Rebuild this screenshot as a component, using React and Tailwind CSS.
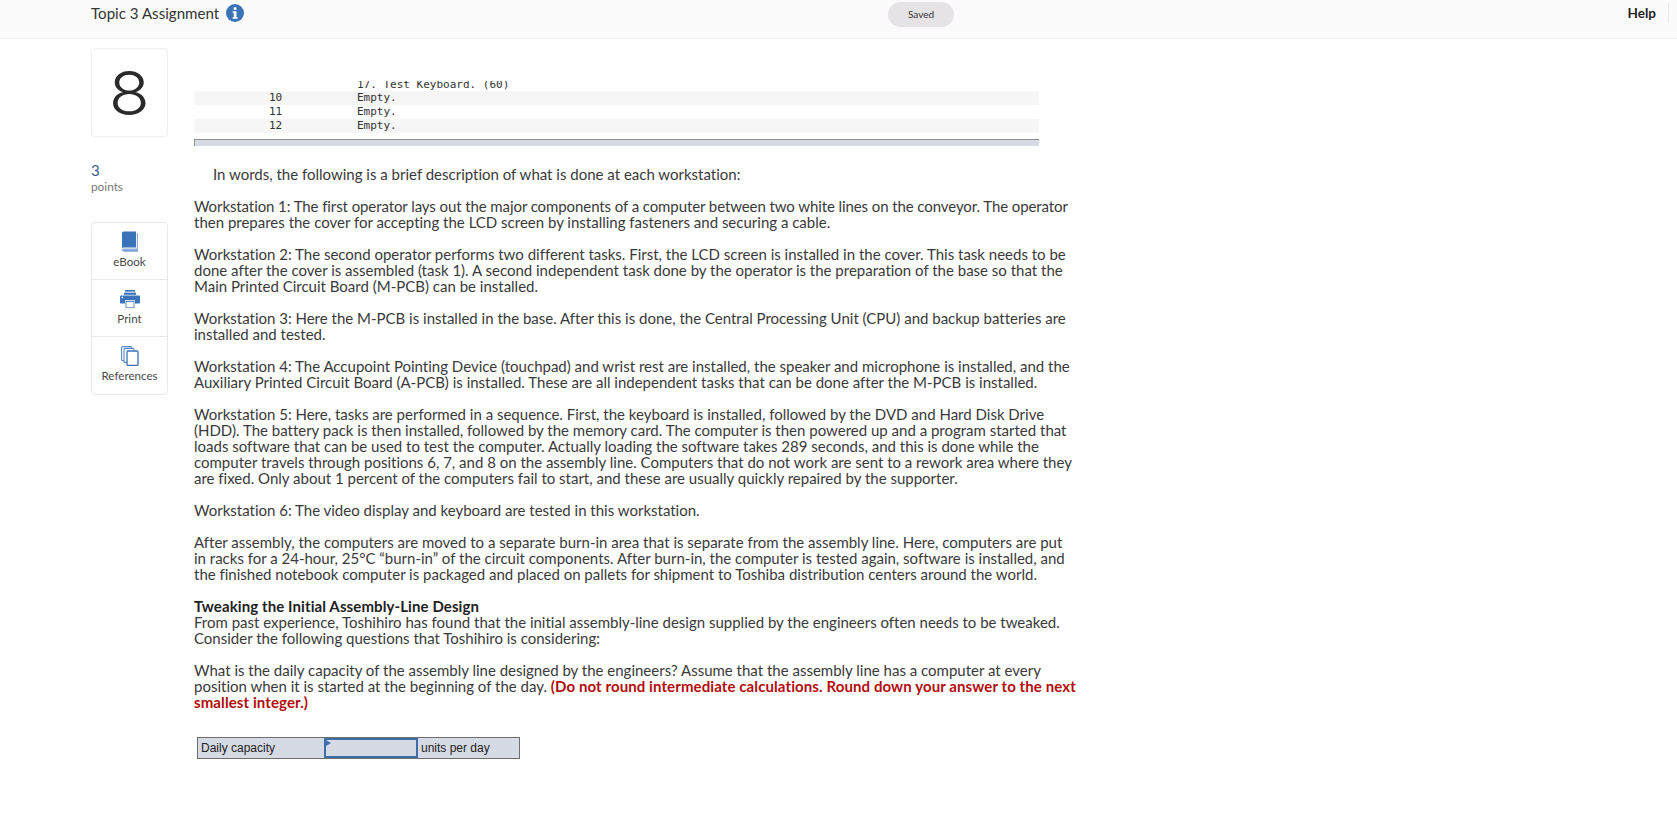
const PARAGRAPHS = [
  ['Workstation 1: The first operator lays out the major components of a computer between two white lines on the conveyor. The operator', 'then prepares the cover for accepting the LCD screen by installing fasteners and securing a cable.'],
  ['Workstation 2: The second operator performs two different tasks. First, the LCD screen is installed in the cover. This task needs to be', 'done after the cover is assembled (task 1). A second independent task done by the operator is the preparation of the base so that the', 'Main Printed Circuit Board (M-PCB) can be installed.'],
  ['Workstation 3: Here the M-PCB is installed in the base. After this is done, the Central Processing Unit (CPU) and backup batteries are', 'installed and tested.'],
  ['Workstation 4: The Accupoint Pointing Device (touchpad) and wrist rest are installed, the speaker and microphone is installed, and the', 'Auxiliary Printed Circuit Board (A-PCB) is installed. These are all independent tasks that can be done after the M-PCB is installed.'],
  ['Workstation 5: Here, tasks are performed in a sequence. First, the keyboard is installed, followed by the DVD and Hard Disk Drive', '(HDD). The battery pack is then installed, followed by the memory card. The computer is then powered up and a program started that', 'loads software that can be used to test the computer. Actually loading the software takes 289 seconds, and this is done while the', 'computer travels through positions 6, 7, and 8 on the assembly line. Computers that do not work are sent to a rework area where they', 'are fixed. Only about 1 percent of the computers fail to start, and these are usually quickly repaired by the supporter.'],
  ['Workstation 6: The video display and keyboard are tested in this workstation.'],
  ['After assembly, the computers are moved to a separate burn-in area that is separate from the assembly line. Here, computers are put', 'in racks for a 24-hour, 25°C “burn-in” of the circuit components. After burn-in, the computer is tested again, software is installed, and', 'the finished notebook computer is packaged and placed on pallets for shipment to Toshiba distribution centers around the world.'],
];

function Lines({ lines }) {
  return lines.map((l) => (
    <div key={l} className={`whitespace-nowrap ${l.startsWith('Workstation 1') ? 'tracking-[-0.09px]' : ''}`}>{l}</div>
  ));
}

function InfoIcon() {
  return (
    <svg width="18" height="18" viewBox="0 0 18 18">
      <circle cx="9" cy="9" r="9" fill="#3b73b9" />
      <rect x="7.6" y="3.2" width="2.9" height="2.7" rx="0.6" fill="#fff" />
      <path d="M6.6 7.2h3.9v6h1.1v1.6H6.6v-1.6h1.1V8.8H6.6z" fill="#fff" />
    </svg>
  );
}

function BookIcon() {
  return (
    <svg width="18" height="21" viewBox="0 0 18 21">
      <path d="M1 2.2Q1 .4 2.8 .4H15v16.2H2.8Q1 16.6 1 18z" fill="#3b73b9" />
      <path d="M15.8 2v15.6H2.6Q1.8 17.6 1.8 18.4T2.6 19.6H17V2z" fill="#8fb0da" />
      <path d="M1 18Q1 20.4 2.8 20.4H17v-.8H2.8Q1.8 19.6 1.8 18.4z" fill="#3b73b9" />
    </svg>
  );
}

function PrintIcon() {
  return (
    <svg width="20" height="18" viewBox="0 0 20 18">
      <rect x="5" y="0" width="10" height="1.6" fill="#3b73b9" />
      <rect x="4" y="2.6" width="12" height="2.2" fill="#3b73b9" />
      <path d="M1.2 5.4h17.6q1.2 0 1.2 1.2v6.2q0 .8-.8.8H15v-3.4H5v3.4H.8q-.8 0-.8-.8V6.6q0-1.2 1.2-1.2z" fill="#3b73b9" />
      <rect x="1.6" y="6.8" width="1.4" height="1.4" fill="#fff" />
      <rect x="6" y="11.4" width="8" height="6.4" fill="#fff" stroke="#3b73b9" strokeWidth="0.8" />
    </svg>
  );
}

function RefsIcon() {
  return (
    <svg width="18" height="20" viewBox="0 0 18 20" fill="#fff" stroke="#5b8bcb" strokeWidth="1.1">
      <rect x="0.6" y="0.6" width="10" height="14" rx="1" />
      <rect x="3" y="2.4" width="10" height="14" rx="1" />
      <rect x="6" y="5" width="11" height="14.4" rx="1" stroke="#3b73b9" strokeWidth="1.3" />
    </svg>
  );
}

function ToolLink({ icon, label, last }) {
  return (
    <div className={`pb-[4px] flex flex-col items-center justify-center gap-[2px] ${last ? 'h-[57px]' : 'h-[57px] border-b border-[#e8e8e8]'}`}>
      <div className="h-[22px] flex items-center justify-center">{icon}</div>
      <span className="text-[11.6px] leading-[13px] text-[#4a4a4a]">{label}</span>
    </div>
  );
}

export default function App() {
  return (
    <div className="min-h-[828px] bg-white text-[#3a3a3a] font-['Lato','Open_Sans',sans-serif] [font-variant-ligatures:none]">
      <header className="h-[39px] bg-[#fbfbfb] border-b border-[#eeeeee] flex items-start relative">
        <div className="w-[91px]" />
        <div className="flex items-center gap-[7px] h-[26px]">
          <span className="text-[15.1px] text-[#333]">Topic 3 Assignment</span>
          <InfoIcon />
        </div>
        <div className="absolute left-[888px] top-[2px] w-[66px] h-[25px] rounded-full bg-[#e5e3e6] flex items-center justify-center text-[10px] text-[#333]">Saved</div>
        <div className="ml-auto flex items-center h-[26px]">
          <span className="text-[13.5px] font-bold text-[#222]">Help</span>
          <div className="ml-[12px] mr-[8px] w-px h-[20px] bg-[#e8e8e8]" />
        </div>
      </header>

      <main className="flex pl-[91px]">
        <aside className="w-[77px] shrink-0 pt-[9px]">
          <div className="h-[89px] border border-[#eeeeee] rounded-[4px] flex items-center justify-center">
            <span className="font-['Inter',sans-serif] text-[60px] font-light leading-none text-[#2a2a2a] scale-x-[1.12]">8</span>
          </div>
          <div className="mt-[24px] text-[15px] leading-[18px] text-[#3b5f8a]">3</div>
          <div className="text-[11.8px] leading-[16px] text-[#777]">points</div>
          <div className="mt-[27px] border border-[#e8e8e8] rounded-[4px]">
            <ToolLink icon={<BookIcon />} label="eBook" />
            <ToolLink icon={<PrintIcon />} label="Print" />
            <ToolLink icon={<RefsIcon />} label="References" last />
          </div>
        </aside>

        <section className="ml-[26px] pt-[42px] text-[15px] leading-[16px]">
          <div className="w-[845px] font-['DejaVu_Sans_Mono',monospace] text-[11px] leading-[14px] text-[#333]">
            <div className="h-[10px] overflow-hidden flex items-end pl-[163px]"><span className="whitespace-pre translate-y-[1px]">17. Test Keyboard. (60)</span></div>
            {['10', '11', '12'].map((n, i) => (
              <div key={n} className={`h-[14px] flex ${i % 2 === 0 ? 'bg-[#f6f6f6]' : ''}`}>
                <span className="w-[72px] ml-[75px] shrink-0">{n}</span>
                <span className="ml-[16px]">Empty.</span>
              </div>
            ))}
            <div className="mt-[6px] h-[7px] bg-[#d6dae5] border-t border-l border-[#8f8f8f]" />
          </div>

          <div className="mt-[20px] pl-[19px] whitespace-nowrap">In words, the following is a brief description of what is done at each workstation:</div>
          <div className="mt-[16px] flex flex-col gap-[16px]">
            {PARAGRAPHS.map((p) => <div key={p[0]}><Lines lines={p} /></div>)}
            <div>
              <div className="font-bold tracking-[0.1px] whitespace-nowrap text-[#222]">Tweaking the Initial Assembly-Line Design</div>
              <div className="whitespace-nowrap">From past experience, Toshihiro has found that the initial assembly-line design supplied by the engineers often needs to be tweaked.</div>
              <div className="whitespace-nowrap">Consider the following questions that Toshihiro is considering:</div>
            </div>
            <div>
              <div className="whitespace-nowrap">What is the daily capacity of the assembly line designed by the engineers? Assume that the assembly line has a computer at every</div>
              <div className="whitespace-nowrap">position when it is started at the beginning of the day. <b className="tracking-[0.1px] text-[#b30c0c]">(Do not round intermediate calculations. Round down your answer to the next</b></div>
              <div className="whitespace-nowrap tracking-[0.1px] font-bold text-[#b30c0c]">smallest integer.)</div>
            </div>
          </div>

          <div className="mt-[27px] ml-[3px] w-[323px] h-[22px] flex border border-[#6f6f6f] bg-[#d6dae5] font-['Liberation_Sans',sans-serif] text-[12px] leading-[20px] text-[#222]">
            <div className="w-[126px] pl-[3px]">Daily capacity</div>
            <div className="relative w-[94px] border-2 border-[#3f6fa8]">
              <div className="absolute left-0 top-0 w-0 h-0 border-y-[3px] border-y-transparent border-l-[5px] border-l-[#3b73b9]" />
            </div>
            <div className="pl-[3px]">units per day</div>
          </div>
        </section>
      </main>
    </div>
  );
}
